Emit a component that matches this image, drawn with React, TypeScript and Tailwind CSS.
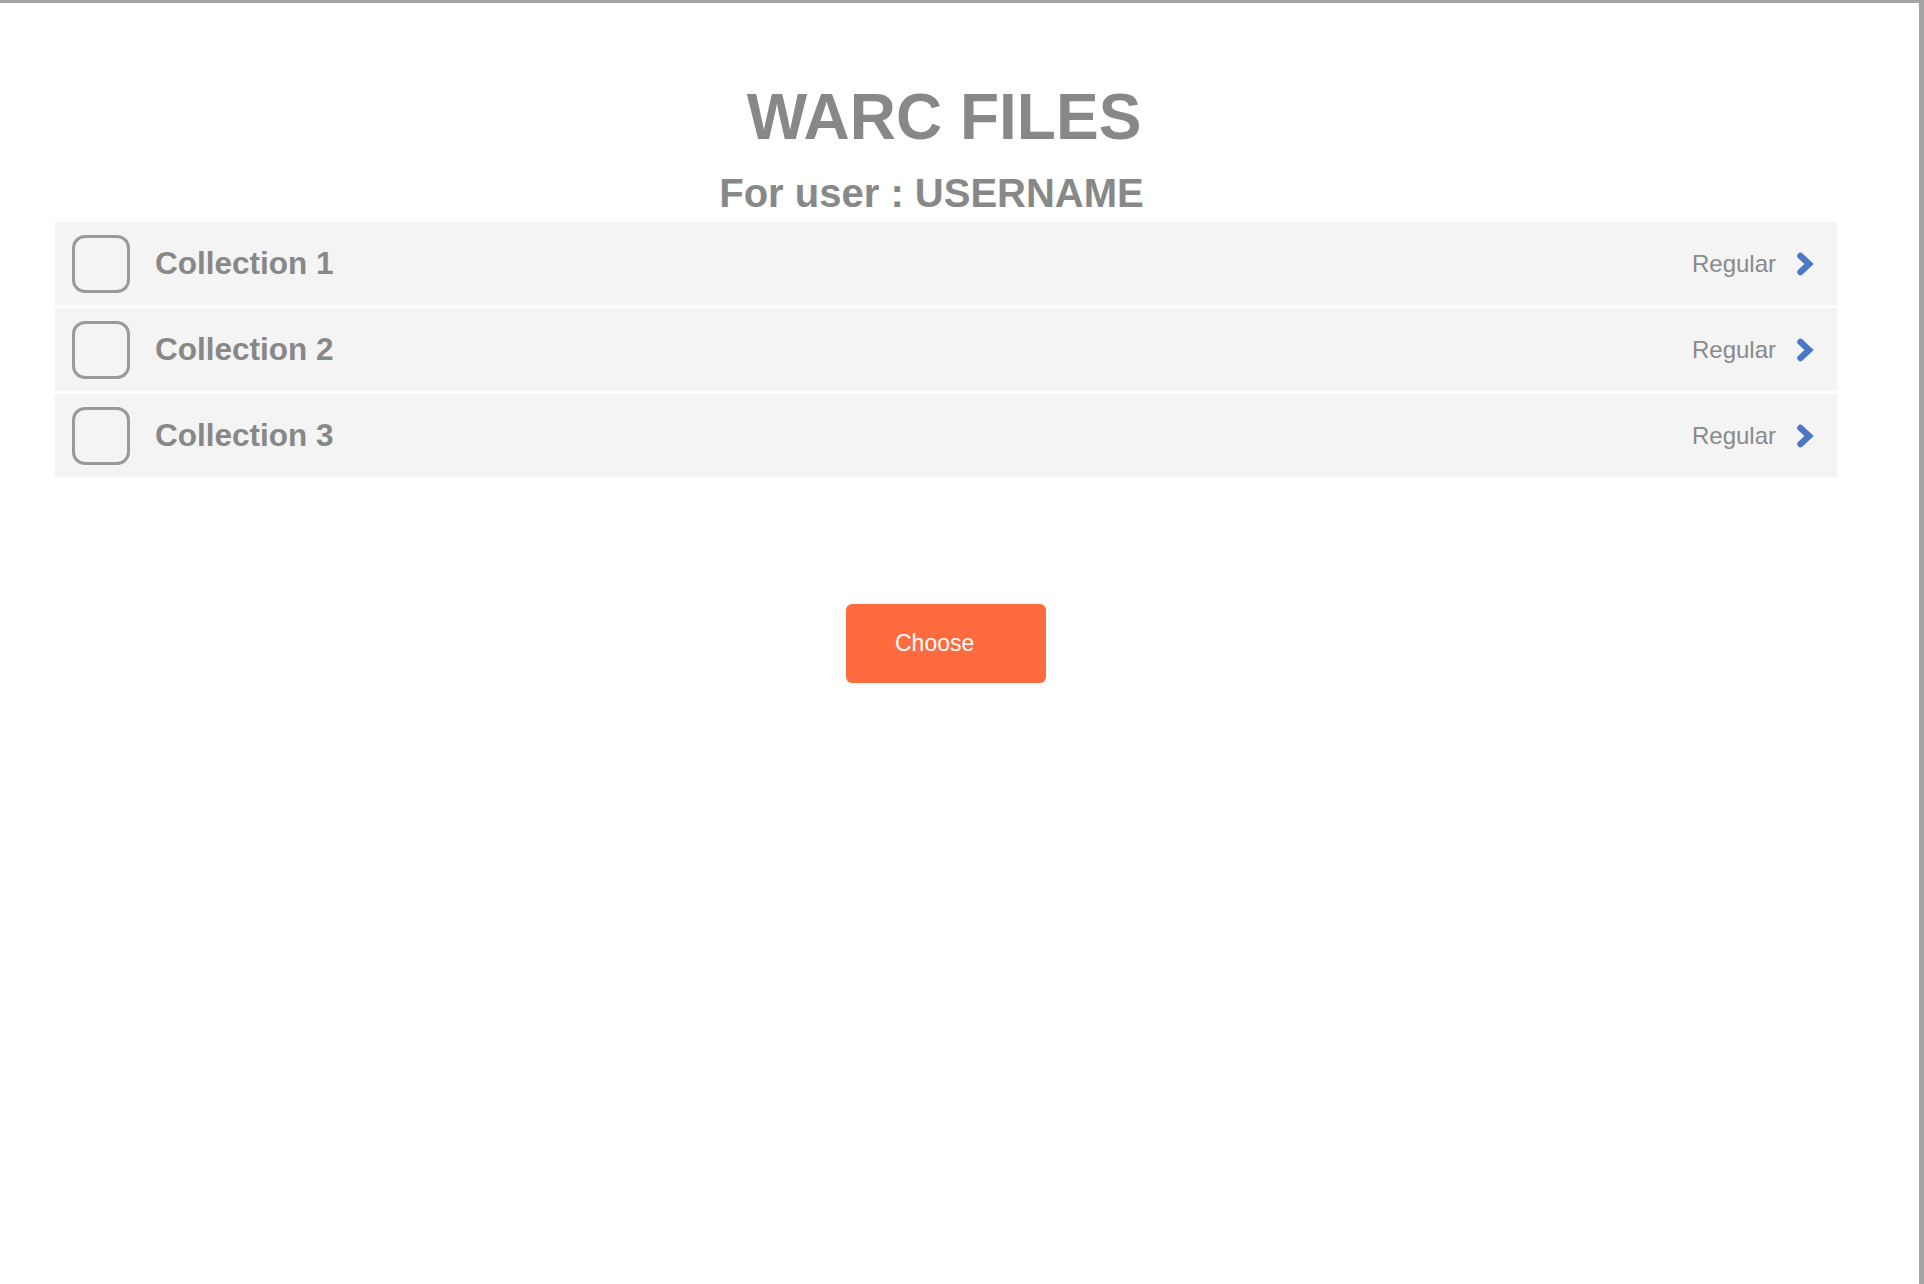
import { useState } from "react";

const collections = ["Collection 1", "Collection 2", "Collection 3"];

function Chevron() {
  return (
    <svg width="18" height="26" viewBox="0 0 18 26" className="shrink-0">
      <path
        d="M4.5 5 L13 13 L4.5 21"
        fill="none"
        stroke="#4b78c4"
        strokeWidth="6.5"
        strokeLinecap="round"
        strokeLinejoin="miter"
      />
    </svg>
  );
}

function App() {
  const [checked, setChecked] = useState<boolean[]>([false, false, false]);

  const toggle = (i: number) => {
    const next = [...checked];
    next[i] = !next[i];
    setChecked(next);
  };

  return (
    <div
      className="h-[1284px] w-full border-t-[3px] border-r-[5px] border-[#a4a4a4] bg-white"
      style={{ fontFamily: '"Liberation Sans", Arial, sans-serif' }}
    >
      <div className="pl-[55px] pr-[82px] pt-[82px]">
        <h1 className="pr-[4px] text-center text-[64px] font-bold leading-none text-[#888888]">
          WARC FILES
        </h1>
        <h2 className="mt-[24px] pr-[29px] text-center text-[40px] font-bold leading-none text-[#888888]">
          For user : USERNAME
        </h2>

        <div className="mt-[9px] flex flex-col gap-[3px]">
          {collections.map((name, i) => (
            <div
              key={name}
              className="flex h-[83px] items-center bg-[#f4f4f4] pl-[17px] pr-[23px]"
            >
              <button
                onClick={() => toggle(i)}
                className="h-[58px] w-[58px] shrink-0 rounded-[13px] border-[3px] border-[#9a9a9a] bg-[#f4f4f4]"
              />
              <span className="ml-[25px] text-[31.5px] font-bold text-[#888888]">
                {name}
              </span>
              <div className="ml-auto flex items-center gap-[20px]">
                <span className="text-[24px] text-[#8a8a8a]">Regular</span>
                <Chevron />
              </div>
            </div>
          ))}
        </div>

        <div className="mt-[127px] flex justify-center">
          <button className="flex h-[79px] w-[200px] items-center rounded-[6px] bg-[#ff6b3e] pl-[49px] text-[23px] text-white">
            Choose
          </button>
        </div>
      </div>
    </div>
  );
}

export default App;
